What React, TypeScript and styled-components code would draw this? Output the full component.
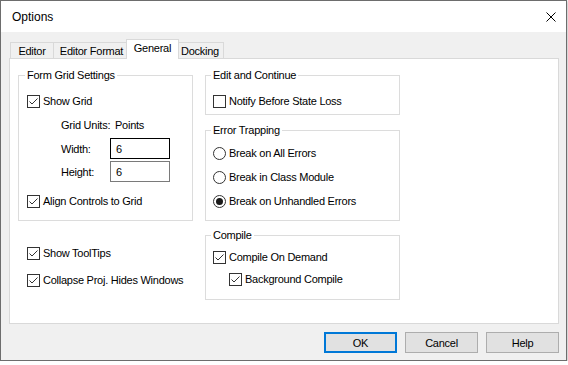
import React from "react";
import styled, { createGlobalStyle } from "styled-components";

const GlobalStyle = createGlobalStyle`
  html, body {
    margin: 0;
    padding: 0;
    background: #ffffff;
  }
`;

const Window = styled.div`
  width: 567px;
  height: 361px;
  box-sizing: border-box;
  border: 1px solid #6d6d6d;
  box-shadow: 1px 1px 3px rgba(0, 0, 0, 0.25);
  display: flex;
  flex-direction: column;
  background: #f0f0f0;
  font-family: "Liberation Sans", Arial, sans-serif;
  font-size: 11px;
  letter-spacing: -0.25px;
  color: #000;
`;

const TitleBar = styled.div`
  height: 31px;
  flex: none;
  background: #fff;
  display: flex;
  align-items: center;
  justify-content: space-between;
  padding: 0 10px 0 11px;
  font-size: 12px;
  letter-spacing: 0;
`;

const Body = styled.div`
  flex: 1;
  display: flex;
  flex-direction: column;
  padding: 7px 7px 0 8px;
`;

const TabStrip = styled.div`
  display: flex;
  align-items: flex-end;
  height: 20px;
  margin-bottom: -1px;
  padding-left: 1px;
  position: relative;
  z-index: 1;
`;

const Tab = styled.div<{ $w: number; $active?: boolean }>`
  position: relative;
  box-sizing: border-box;
  width: ${(p) => p.$w + (p.$active ? 4 : 0)}px;
  height: ${(p) => (p.$active ? 20 : 16)}px;
  margin: ${(p) => (p.$active ? "0 -3px 0 -3px" : "0 -1px 1px 0")};
  z-index: ${(p) => (p.$active ? 2 : 1)};
  border: 1px solid #d9d9d9;
  border-bottom: none;
  background: ${(p) => (p.$active ? "#fff" : "#f0f0f0")};
  display: flex;
  align-items: center;
  justify-content: center;
  padding-bottom: ${(p) => (p.$active ? 3 : 0)}px;
`;

const Panel = styled.div`
  box-sizing: border-box;
  width: 550px;
  height: 266px;
  border: 1px solid #d9d9d9;
  background: #fff;
  display: grid;
  grid-template-columns: 175px 195px;
  column-gap: 12px;
  align-content: start;
  padding: 16px 0 0 8px;
`;

const Column = styled.div`
  display: flex;
  flex-direction: column;
`;

const Group = styled.div<{ $h: number; $mt?: number; $pl?: number }>`
  box-sizing: border-box;
  height: ${(p) => p.$h}px;
  margin-top: ${(p) => p.$mt ?? 0}px;
  border: 1px solid #dcdcdc;
  padding-left: ${(p) => p.$pl ?? 7}px;
`;

const Caption = styled.span`
  display: block;
  width: fit-content;
  height: 13px;
  line-height: 13px;
  margin: -7px 0 0 -2px;
  padding: 0 2px;
  background: #fff;
`;

const GroupBody = styled.div<{ $pt: number }>`
  padding-top: ${(p) => p.$pt}px;
  display: flex;
  flex-direction: column;
`;

const Row = styled.div<{ $h?: number; $indent?: number; $mt?: number }>`
  display: flex;
  align-items: center;
  gap: 3px;
  height: ${(p) => p.$h ?? 24}px;
  margin-left: ${(p) => p.$indent ?? 0}px;
  margin-top: ${(p) => p.$mt ?? 0}px;
  white-space: nowrap;
`;

const FieldLabel = styled.span<{ $w: number }>`
  width: ${(p) => p.$w}px;
  flex: none;
`;

const TextBox = styled.div<{ $focused?: boolean }>`
  box-sizing: border-box;
  width: 60px;
  height: 21px;
  border: 1px solid ${(p) => (p.$focused ? "#000" : "#7a7a7a")};
  padding: 0 5px;
  display: flex;
  align-items: center;
  background: #fff;
`;

const Box = styled.span`
  box-sizing: border-box;
  width: 13px;
  height: 13px;
  flex: none;
  border: 1px solid #333;
  background: #fff;
  display: flex;
`;

const Round = styled.span`
  box-sizing: border-box;
  width: 13px;
  height: 13px;
  flex: none;
  border: 1px solid #333;
  border-radius: 50%;
  background: #fff;
  display: flex;
  align-items: center;
  justify-content: center;
`;

const Dot = styled.span`
  width: 7px;
  height: 7px;
  border-radius: 50%;
  background: #1a1a1a;
`;

const Footer = styled.div`
  display: flex;
  justify-content: flex-end;
  gap: 8px;
  padding-top: 8px;
`;

const Button = styled.button<{ $default?: boolean }>`
  box-sizing: border-box;
  width: 73px;
  height: 21px;
  padding: 0;
  margin: 0;
  background: #e1e1e1;
  border: ${(p) => (p.$default ? "2px solid #0078d7" : "1px solid #adadad")};
  font: inherit;
  letter-spacing: inherit;
  color: #000;
`;

const CheckBox = ({ checked }: { checked?: boolean }) => (
  <Box>
    {checked && (
      <svg width="11" height="11" viewBox="0 0 11 11">
        <polyline points="1.5,5.5 4,8 9.5,2.5" fill="none" stroke="#333" strokeWidth="1" />
      </svg>
    )}
  </Box>
);

const Radio = ({ checked }: { checked?: boolean }) => <Round>{checked && <Dot />}</Round>;

const CheckRow = ({
  label,
  checked,
  h,
  indent,
  mt,
}: {
  label: string;
  checked?: boolean;
  h?: number;
  indent?: number;
  mt?: number;
}) => (
  <Row $h={h} $indent={indent} $mt={mt}>
    <CheckBox checked={checked} />
    <span>{label}</span>
  </Row>
);

const RadioRow = ({ label, checked }: { label: string; checked?: boolean }) => (
  <Row>
    <Radio checked={checked} />
    <span>{label}</span>
  </Row>
);

const tabs = [
  { label: "Editor", w: 44 },
  { label: "Editor Format", w: 77 },
  { label: "General", w: 49, active: true },
  { label: "Docking", w: 48 },
];

export default function App() {
  return (
    <>
      <GlobalStyle />
      <Window>
        <TitleBar>
          <span>Options</span>
          <svg width="10" height="10" viewBox="0 0 10 10">
            <path d="M0.5 0.5 L9.5 9.5 M9.5 0.5 L0.5 9.5" stroke="#000" strokeWidth="1" />
          </svg>
        </TitleBar>

        <Body>
          <TabStrip>
            {tabs.map((t) => (
              <Tab key={t.label} $w={t.w} $active={t.active}>
                {t.label}
              </Tab>
            ))}
          </TabStrip>

          <Panel>
            <Column>
              <Group $h={146} $pl={8}>
                <Caption>Form Grid Settings</Caption>
                <GroupBody $pt={7}>
                  <CheckRow label="Show Grid" checked />
                  <Row $indent={34}>
                    <FieldLabel $w={51}>Grid Units:</FieldLabel>
                    <span>Points</span>
                  </Row>
                  <Row $h={23} $indent={34}>
                    <FieldLabel $w={46}>Width:</FieldLabel>
                    <TextBox $focused>6</TextBox>
                  </Row>
                  <Row $h={23} $indent={34}>
                    <FieldLabel $w={46}>Height:</FieldLabel>
                    <TextBox>6</TextBox>
                  </Row>
                  <CheckRow label="Align Controls to Grid" checked mt={6} />
                </GroupBody>
              </Group>
              <CheckRow label="Show ToolTips" checked mt={20} indent={9} />
              <CheckRow label="Collapse Proj. Hides Windows" checked mt={3} indent={9} />
            </Column>

            <Column>
              <Group $h={40}>
                <Caption>Edit and Continue</Caption>
                <GroupBody $pt={7}>
                  <CheckRow label="Notify Before State Loss" />
                </GroupBody>
              </Group>
              <Group $h={91} $mt={15}>
                <Caption>Error Trapping</Caption>
                <GroupBody $pt={4}>
                  <RadioRow label="Break on All Errors" />
                  <RadioRow label="Break in Class Module" />
                  <RadioRow label="Break on Unhandled Errors" checked />
                </GroupBody>
              </Group>
              <Group $h={65} $mt={14}>
                <Caption>Compile</Caption>
                <GroupBody $pt={4}>
                  <CheckRow label="Compile On Demand" checked h={22} />
                  <CheckRow label="Background Compile" checked h={22} indent={16} />
                </GroupBody>
              </Group>
            </Column>
          </Panel>

          <Footer>
            <Button $default>OK</Button>
            <Button>Cancel</Button>
            <Button>Help</Button>
          </Footer>
        </Body>
      </Window>
    </>
  );
}
